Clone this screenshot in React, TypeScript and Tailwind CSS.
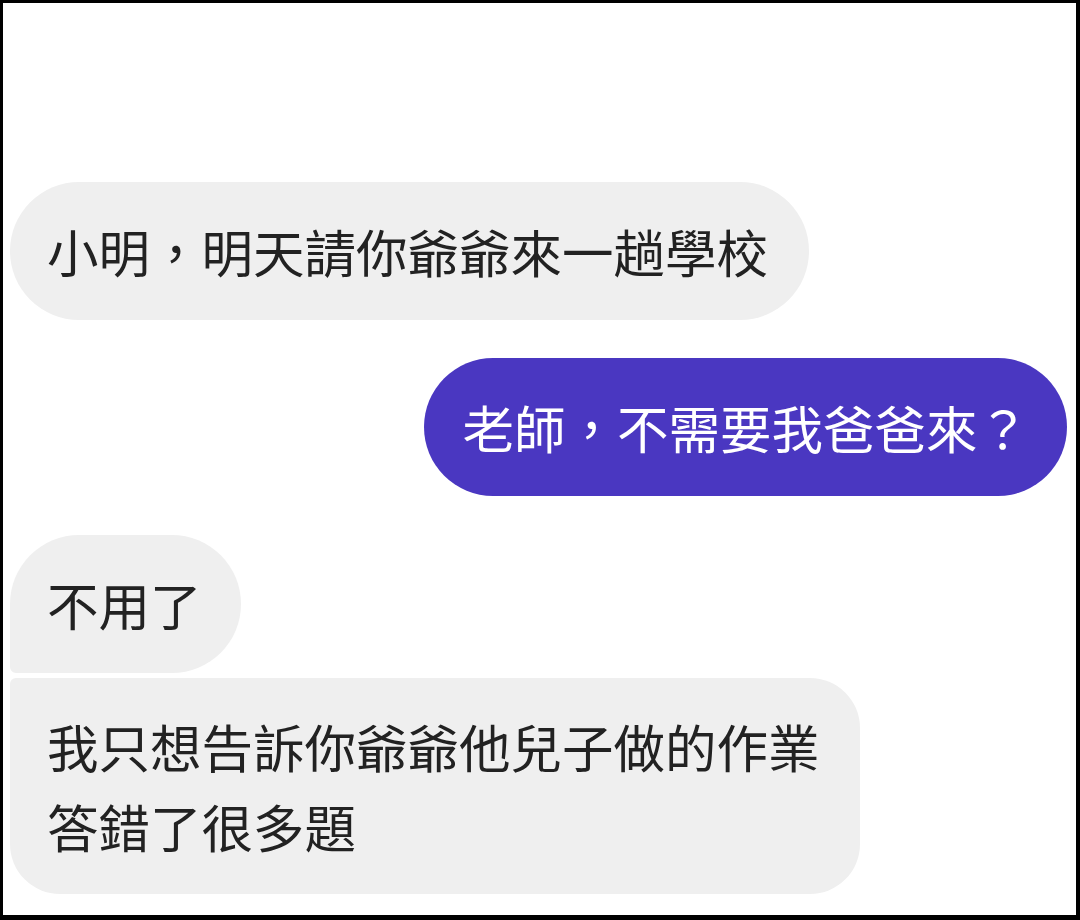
import React from "react";

const font = { fontFamily: '"Noto Sans CJK TC", "Noto Sans", sans-serif' };

export default function App() {
  return (
    <div
      className="w-[1080px] h-[920px] bg-white border-black border-t-[3px] border-l-[3px] border-r-[4px] border-b-[5px] box-border overflow-hidden"
      style={font}
    >
      <div className="flex flex-col pl-[7px] pr-[9px] pt-[179px] text-[51.5px] leading-[80px] text-[#222222]">
        <div className="self-start rounded-full bg-[#efefef] pl-[37px] pr-[41px] py-[29px] whitespace-nowrap">
          小明，明天請你爺爺來一趟學校
        </div>
        <div className="self-end mt-[38px] rounded-full bg-[#4a37c1] text-white px-[38px] py-[29px] whitespace-nowrap">
          老師，不需要我爸爸來？
        </div>
        <div className="self-start mt-[39px] rounded-[69px] rounded-bl-[6px] bg-[#efefef] pl-[37px] pr-[39px] py-[29px] whitespace-nowrap">
          不用了
        </div>
        <div className="self-start mt-[5px] rounded-[50px] rounded-tl-[6px] bg-[#efefef] pl-[37px] pr-[40px] py-[28px] whitespace-nowrap">
          我只想告訴你爺爺他兒子做的作業
          <br />
          答錯了很多題
        </div>
      </div>
    </div>
  );
}
